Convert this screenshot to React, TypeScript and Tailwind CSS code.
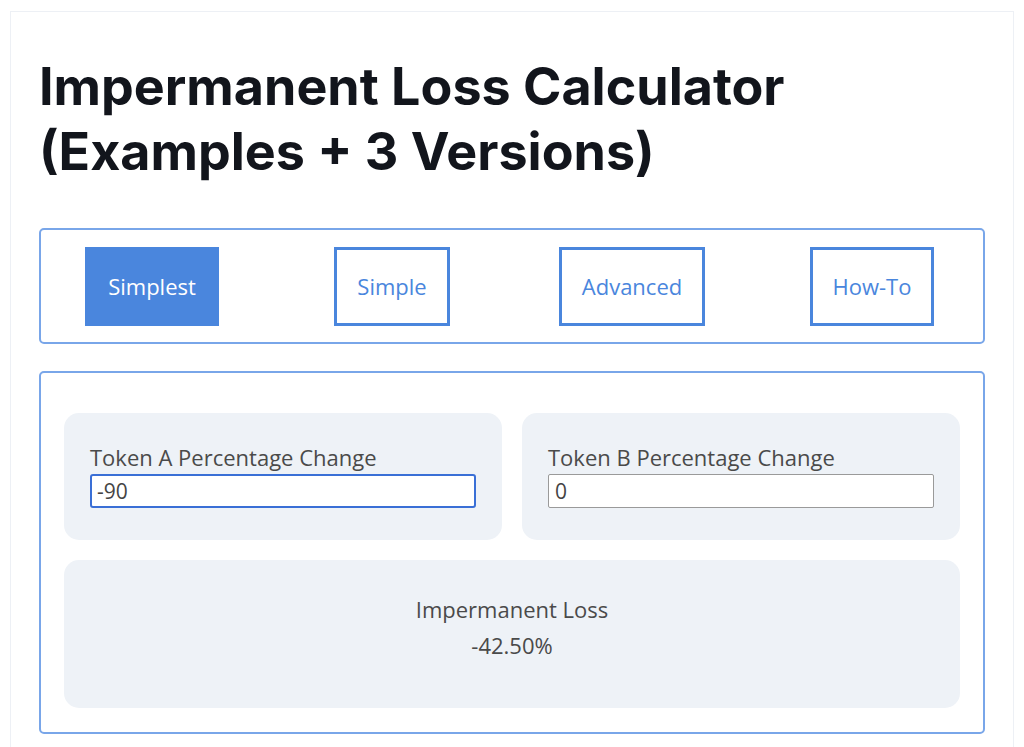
import { useState } from "react";

const tabs = ["Simplest", "Simple", "Advanced", "How-To"];

function TokenField({ label, value, active }: { label: string; value: string; active?: boolean }) {
  return (
    <div className="rounded-[15px] bg-[#eef2f7] px-[26px] pt-[30px] pb-[32px]">
      <label className="block text-[22px] leading-[28px] text-[#4a4a4a]">{label}</label>
      <input
        type="text"
        defaultValue={value}
        className={
          active
            ? "mt-[3px] block h-[34px] w-full rounded-[3px] border-2 border-[#3a6fd6] bg-white px-[5px] text-[21px] text-[#444] outline-none"
            : "mt-[3px] block h-[34px] w-full rounded-[2px] border border-[#9a9a9a] bg-white px-[6px] text-[21px] text-[#444] outline-none"
        }
      />
    </div>
  );
}

export default function App() {
  const [tab, setTab] = useState("Simplest");

  return (
    <div className="min-h-screen bg-white px-[10px] pt-[11px] font-['Open_Sans',sans-serif]">
      <div className="border border-b-0 border-[#edf0f5] px-[28px] pt-[42px] pb-10">
        <h1 className="font-['Inter',sans-serif] text-[52px] leading-[65px] font-bold text-[#12151c]">
          Impermanent Loss Calculator
          <br />
          (Examples + 3 Versions)
        </h1>

        {/* Version tabs */}
        <div className="mt-[44px] flex h-[116px] items-center justify-center overflow-hidden rounded-[5px] border-2 border-[#79a6e9]">
          {tabs.map((name) => (
            <div key={name} className="flex w-[240px] shrink-0 justify-center">
              <button
                onClick={() => setTab(name)}
                className={
                  tab === name
                    ? "h-[79px] border-[3px] border-[#4a86dd] bg-[#4a86dd] px-[20px] text-[22px] text-white"
                    : "h-[79px] border-[3px] border-[#4a86dd] bg-white px-[20px] text-[22px] text-[#4a86dd]"
                }
              >
                {name}
              </button>
            </div>
          ))}
        </div>

        {/* Calculator */}
        <div className="mt-[27px] rounded-[5px] border-2 border-[#79a6e9] px-[23px] pt-[40px] pb-[24px]">
          <div className="grid grid-cols-2 gap-5">
            <TokenField label="Token A Percentage Change" value="-90" active />
            <TokenField label="Token B Percentage Change" value="0" />
          </div>
          <div className="mt-5 h-[148px] rounded-[15px] bg-[#eef2f7] pt-[31px] text-center text-[22px] leading-[36px] text-[#4a4a4a]">
            <div>Impermanent Loss</div>
            <div>-42.50%</div>
          </div>
        </div>
      </div>
    </div>
  );
}
